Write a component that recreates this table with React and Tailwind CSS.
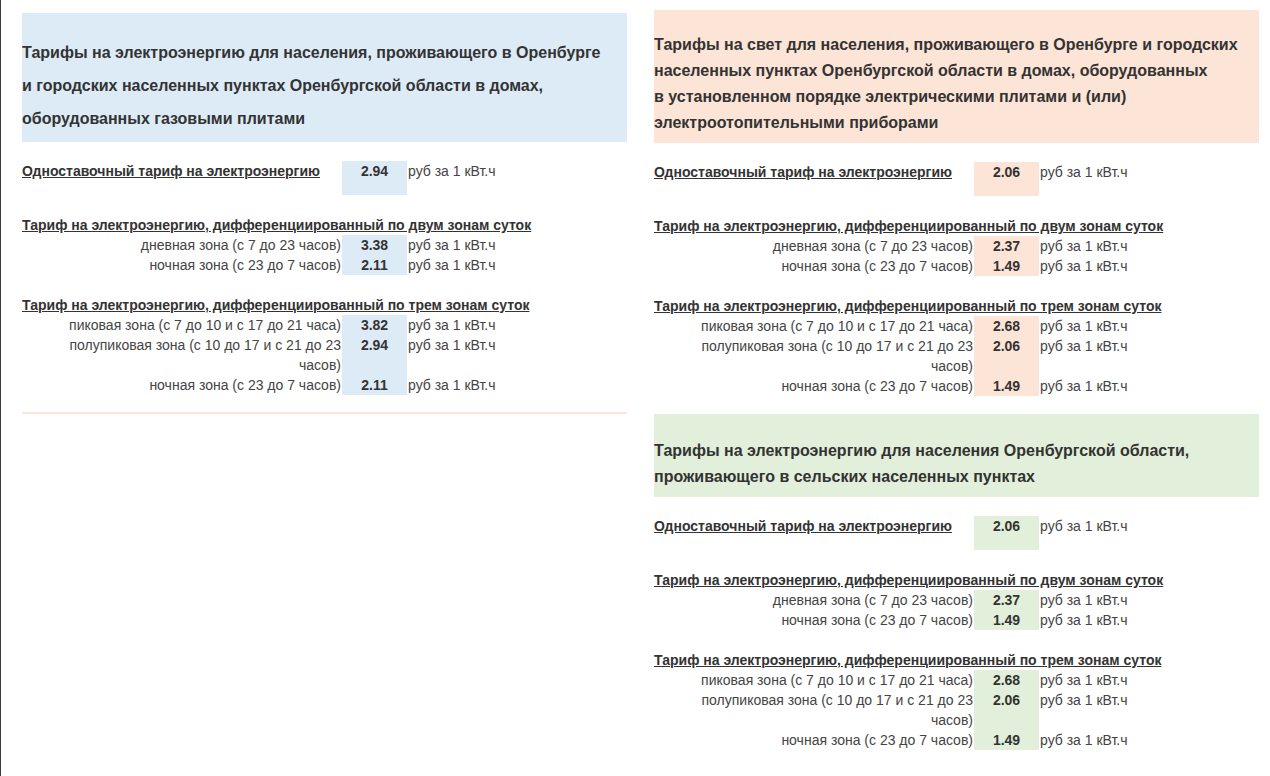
import React from 'react'

const font = { fontFamily: '"Liberation Sans", Arial, sans-serif' }

const blocks = {
    gas: {
        bg: 'bg-[#ddebf7]',
        head: 'pt-[23px] pb-[7px] leading-[33px]',
        title: [
            'Тарифы на электроэнергию для населения, проживающего в Оренбурге',
            'и городских населенных пунктах Оренбургской области в домах,',
            'оборудованных газовыми плитами',
        ],
        single: '2.94',
        two: ['3.38', '2.11'],
        three: ['3.82', '2.94', '2.11'],
    },
    electric: {
        bg: 'bg-[#fce4d6]',
        head: 'pt-[22px] pb-[7px] leading-[26px]',
        title: [
            'Тарифы на свет для населения, проживающего в Оренбурге и городских',
            'населенных пунктах Оренбургской области в домах, оборудованных',
            'в установленном порядке электрическими плитами и (или)',
            'электроотопительными приборами',
        ],
        single: '2.06',
        two: ['2.37', '1.49'],
        three: ['2.68', '2.06', '1.49'],
    },
    rural: {
        bg: 'bg-[#e2efda]',
        head: 'pt-[24px] pb-[7px] leading-[26px]',
        title: [
            'Тарифы на электроэнергию для населения Оренбургской области,',
            'проживающего в сельских населенных пунктах',
        ],
        single: '2.06',
        two: ['2.37', '1.49'],
        three: ['2.68', '2.06', '1.49'],
    },
};

const twoZones = ['дневная зона (с 7 до 23 часов)', 'ночная зона (с 23 до 7 часов)'];
const threeZones = [
    'пиковая зона (с 7 до 10 и с 17 до 21 часа)',
    'полупиковая зона (с 10 до 17 и с 21 до 23 часов)',
    'ночная зона (с 23 до 7 часов)',
];

function ZoneRow({ label, value, bg }) {
    return (
        <div className="flex">
            <div className="w-[320px] shrink-0 pl-[30px] pr-[1px] text-right text-[#444]">{label}</div>
            <div className={`w-[65px] shrink-0 ${bg} text-center font-bold text-[#333]`}>{value}</div>
            <div className="pl-[1px] text-[#444]">руб за 1 кВт.ч</div>
        </div>
    );
}

function TariffBlock({ data }) {
    const { bg } = data;
    return (
        <div>
            {/* Header */}
            <div className={`${bg} ${data.head} text-[16px] font-bold text-[#333]`}>
                {data.title.map((line, i) => (
                    <div key={i}>{line}</div>
                ))}
            </div>

            <div className="text-[14px] leading-5">
                {/* Single rate */}
                <div className="flex mt-[19px]">
                    <div className="w-[320px] shrink-0 font-bold underline text-[#333]">
                        Одноставочный тариф на электроэнергию
                    </div>
                    <div className={`w-[65px] h-[34px] shrink-0 ${bg} text-center font-bold text-[#333]`}>
                        {data.single}
                    </div>
                    <div className="pl-[1px] text-[#444]">руб за 1 кВт.ч</div>
                </div>

                {/* Two zones */}
                <div className="mt-5 font-bold underline text-[#333]">
                    Тариф на электроэнергию, дифференциированный по двум зонам суток
                </div>
                {twoZones.map((label, i) => (
                    <ZoneRow key={label} label={label} value={data.two[i]} bg={bg} />
                ))}

                {/* Three zones */}
                <div className="mt-5 font-bold underline text-[#333]">
                    Тариф на электроэнергию, дифференциированный по трем зонам суток
                </div>
                {threeZones.map((label, i) => (
                    <ZoneRow key={label} label={label} value={data.three[i]} bg={bg} />
                ))}
            </div>
        </div>
    );
}

export default function App() {
    return (
        <div className="min-h-screen bg-white border-l border-[#3a3a3a]" style={font}>
            <div className="flex gap-[27px] pl-[21px]">
                <div className="w-[605px] shrink-0 pt-[13px]">
                    <TariffBlock data={blocks.gas} />
                    <div className="mt-[17px] h-[2px] bg-[#fce4d6]"></div>
                </div>
                <div className="w-[605px] shrink-0 pt-[10px]">
                    <TariffBlock data={blocks.electric} />
                    <div className="mt-[18px]">
                        <TariffBlock data={blocks.rural} />
                    </div>
                </div>
            </div>
        </div>
    );
}
